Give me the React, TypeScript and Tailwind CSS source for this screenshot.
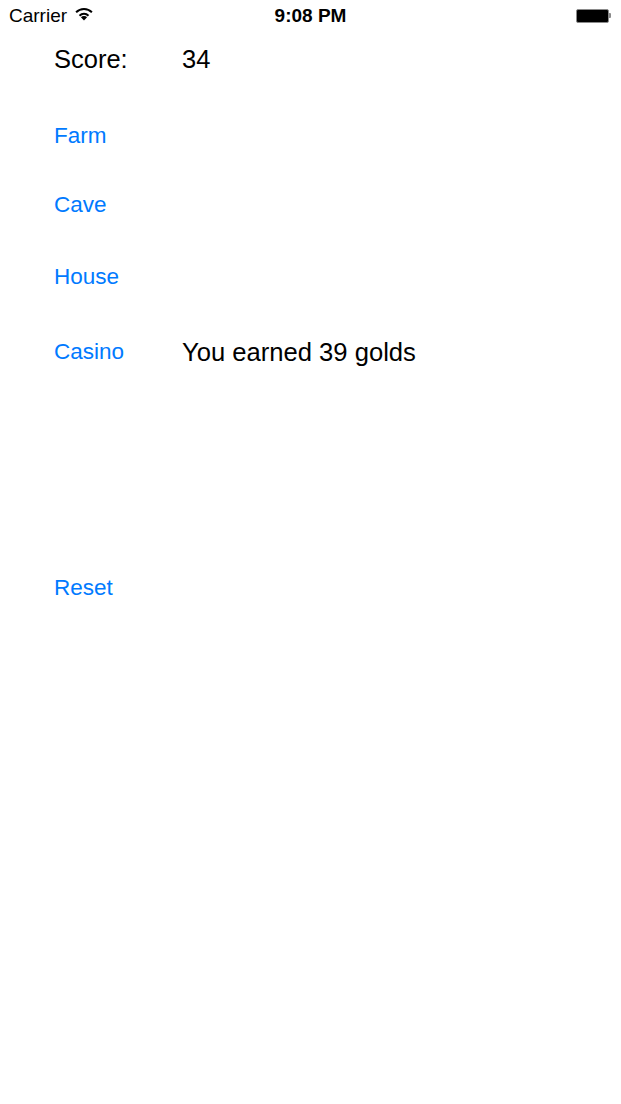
export default function App() {
  return (
    <div className="min-h-[1104px] w-full bg-white text-black" style={{ fontFamily: '"Liberation Sans", Arial, sans-serif' }}>
      {/* status bar */}
      <div className="flex h-[31px] items-center justify-between px-[9px]">
        <div className="flex w-[200px] items-center gap-[7px] text-[19px] leading-none">
          <span>Carrier</span>
          <svg width="20" height="14" viewBox="0 0 20 14" className="mt-[-3px]">
            <path d="M10 13.5 L6.9 10.2 A4.4 4.4 0 0 1 13.1 10.2 Z" fill="black" />
            <path d="M4.8 8 A7.4 7.4 0 0 1 15.2 8 L13.8 9.4 A5.4 5.4 0 0 0 6.2 9.4 Z" fill="black" />
            <path d="M1.4 4.6 A12.2 12.2 0 0 1 18.6 4.6 L17.2 6 A10.2 10.2 0 0 0 2.8 6 Z" fill="black" />
          </svg>
        </div>
        <div className="text-[19px] font-bold leading-none">9:08 PM</div>
        <div className="flex w-[200px] items-center justify-end pr-[1px]">
          <div className="h-[14px] w-[33px] rounded-[2px] border border-[#8a8a8a] bg-black" />
          <div className="h-[5px] w-[2px] rounded-r-[1px] bg-[#8a8a8a]" />
        </div>
      </div>

      <div className="pl-[54px]">
        <div className="mt-[10px] flex h-[36px] items-center text-[25.5px]">
          <span className="w-[128px]">Score:</span>
          <span>34</span>
        </div>

        <div className="mt-[41px] flex h-[36px] items-center text-[22.5px] text-[#007aff]">Farm</div>
        <div className="mt-[33px] flex h-[36px] items-center text-[22.5px] text-[#007aff]">Cave</div>
        <div className="mt-[36px] flex h-[36px] items-center text-[22.5px] text-[#007aff]">House</div>
        <div className="mt-[39px] flex h-[36px] items-center">
          <span className="w-[128px] text-[22.5px] text-[#007aff]">Casino</span>
          <span className="text-[25.6px]">You earned 39 golds</span>
        </div>

        <div className="mt-[200px] flex h-[36px] items-center text-[22.5px] text-[#007aff]">Reset</div>
      </div>
    </div>
  );
}
